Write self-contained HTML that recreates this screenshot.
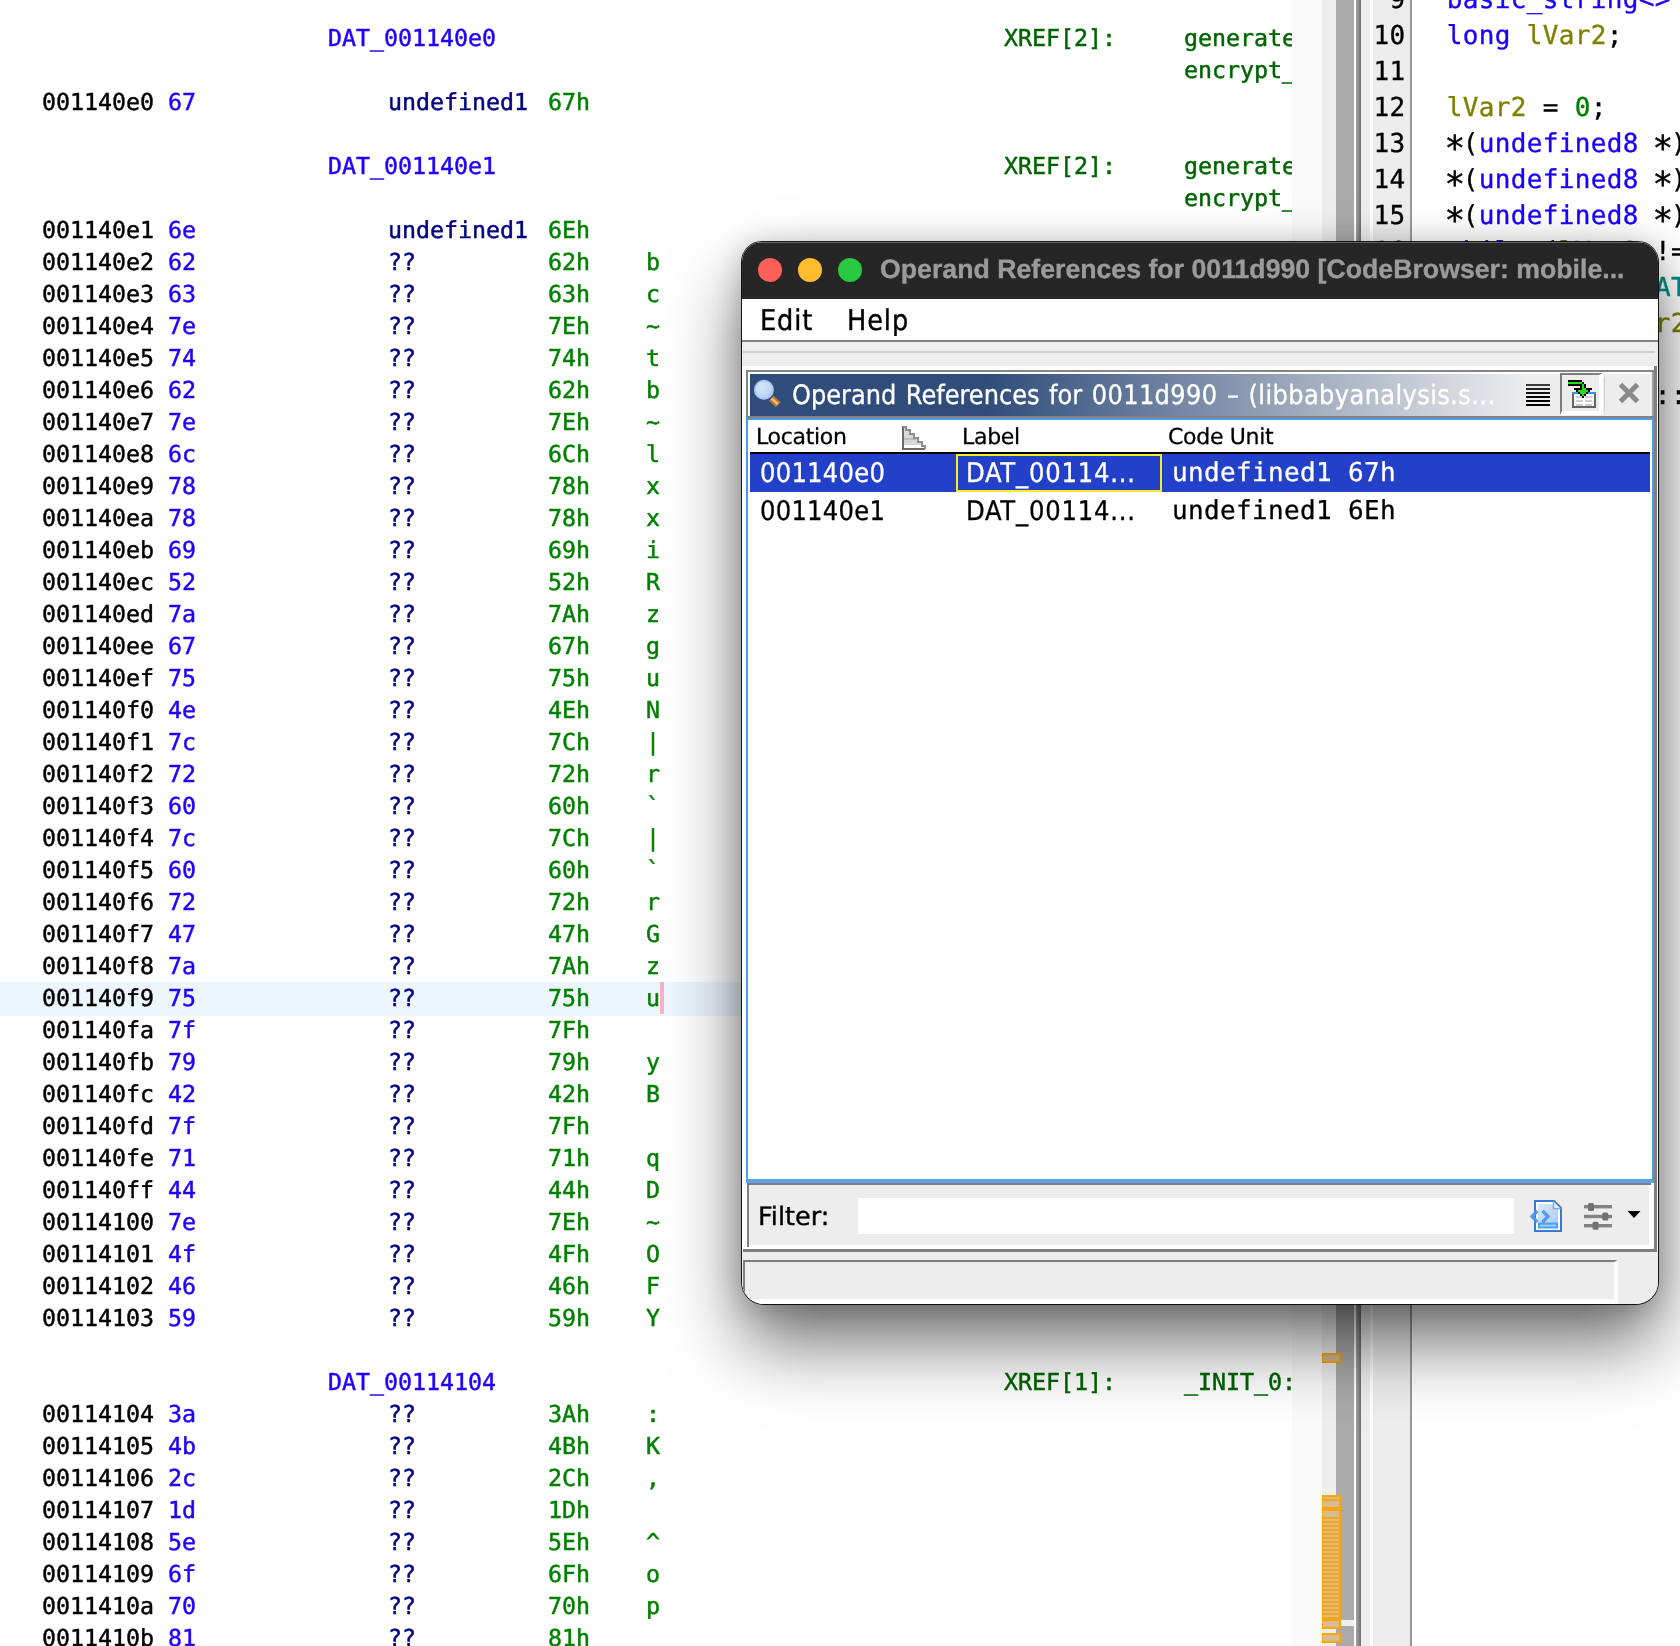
<!DOCTYPE html>
<html><head><meta charset="utf-8"><title>Operand References</title>
<style>
*{box-sizing:border-box;margin:0;padding:0}
html,body{width:1680px;height:1646px;overflow:hidden;background:#fff}
body{position:relative;font-family:"DejaVu Sans Mono","Liberation Mono",monospace}
i{font-style:normal;display:block;position:absolute}
#root{text-rendering:geometricPrecision;position:absolute;left:0;top:0;width:1680px;height:1646px;overflow:hidden;will-change:transform}
/* listing */
#ls{-webkit-text-stroke:0.45px;position:absolute;left:0;top:0;width:1292px;height:1646px;overflow:hidden;background:#fff;font-size:23.3px;letter-spacing:-0.028px;line-height:32px;white-space:pre}
.r{position:absolute;left:0;width:1292px;height:32px}
.r span{position:absolute;top:0}
.hl{background:#edf5fe;height:34px;margin-top:-0.5px}
.hl span{margin-top:0.5px}
.cur{left:660px;top:0;width:4px;height:32px;background:#f5b3c4}
.ad{color:#000}.by{color:#1f00ff}.lb{color:#1f00ff}.mn{color:#000080}.op{color:#008000}.xr{color:#006400}
/* strip */
#st i{top:0;height:1646px}
/* decompiler */
#dc{position:absolute;left:1412px;top:0;width:268px;height:1646px;overflow:hidden;background:#fff}
.ln,.dc{-webkit-text-stroke:0.35px;position:absolute;font-size:26px;letter-spacing:0.35px;line-height:36px;height:36px;white-space:pre;color:#000}
.ln{left:1371.4px;width:34px;text-align:right}
.dc{left:1446.8px}
.as{display:inline-block;transform:translateY(5.5px) scale(1.32)}
.kb{color:#1a00ff}.kv{color:#808000}.kg{color:#008000}.kc{color:#008b8b}
/* markers */
.mk{left:1322px;width:19px;border:2px solid #ffa500;border-left-width:1.5px;background:#d4bc94}
/* window */
#win{position:absolute;left:742px;top:242px;width:916px;height:1062px;border-radius:20px 20px 22px 22px;background:#ededed;overflow:hidden;font-family:"DejaVu Sans","Liberation Sans",sans-serif}
#shadow{position:absolute;left:742px;top:242px;width:916px;height:1062px;border-radius:20px 20px 22px 22px;box-shadow:0 0 0 1px rgba(0,0,0,.88),0 40px 72px rgba(0,0,0,.55),0 4px 30px rgba(0,0,0,.22)}
#tb{position:absolute;left:0;top:0;width:916px;height:57px;background:#262626;box-shadow:inset 0 1px 0 rgba(255,255,255,.28)}
#tb i{top:16px;width:24px;height:24px;border-radius:12px}
#tt{position:absolute;left:138px;top:0;line-height:54px;font-family:"Liberation Sans",sans-serif;font-weight:bold;font-size:26.7px;color:#9b9b9b;-webkit-text-stroke:0.35px #9b9b9b;white-space:pre}
#mb{position:absolute;left:0;top:57px;width:916px;height:43px;background:#fff;border-bottom:2px solid #808080;font-family:"DejaVu Sans Condensed","DejaVu Sans",sans-serif;font-size:28.5px;letter-spacing:0.9px;line-height:44px;white-space:pre;-webkit-text-stroke:0.4px #000}
#mb span{position:absolute;top:0}

#win .a{position:absolute}
#win .t{position:absolute;white-space:pre;font-family:"DejaVu Sans Condensed","DejaVu Sans","Liberation Sans",sans-serif}
#win .m{-webkit-text-stroke:0.3px;position:absolute;white-space:pre;font-family:"DejaVu Sans Mono","Liberation Mono",monospace;font-size:26px;letter-spacing:0.35px}
svg{position:absolute;overflow:visible}
</style></head>
<body>
<div id="root">
<div id="ls">
<div class="r" style="top:22.5px"><span class="lb" style="left:328px">DAT_001140e0</span><span class="xr" style="left:1004px">XREF[2]:</span><span class="xr" style="left:1184px">generate</span></div>
<div class="r" style="top:54.5px"><span class="xr" style="left:1184px">encrypt_</span></div>
<div class="r" style="top:86.5px"><span class="ad" style="left:42px">001140e0</span><span class="by" style="left:168px">67</span><span class="mn" style="left:388px">undefined1</span><span class="op" style="left:548px">67h</span></div>
<div class="r" style="top:150.5px"><span class="lb" style="left:328px">DAT_001140e1</span><span class="xr" style="left:1004px">XREF[2]:</span><span class="xr" style="left:1184px">generate</span></div>
<div class="r" style="top:182.5px"><span class="xr" style="left:1184px">encrypt_</span></div>
<div class="r" style="top:214.5px"><span class="ad" style="left:42px">001140e1</span><span class="by" style="left:168px">6e</span><span class="mn" style="left:388px">undefined1</span><span class="op" style="left:548px">6Eh</span></div>
<div class="r" style="top:246.5px"><span class="ad" style="left:42px">001140e2</span><span class="by" style="left:168px">62</span><span class="mn" style="left:388px">??</span><span class="op" style="left:548px">62h</span><span class="op" style="left:646px">b</span></div>
<div class="r" style="top:278.5px"><span class="ad" style="left:42px">001140e3</span><span class="by" style="left:168px">63</span><span class="mn" style="left:388px">??</span><span class="op" style="left:548px">63h</span><span class="op" style="left:646px">c</span></div>
<div class="r" style="top:310.5px"><span class="ad" style="left:42px">001140e4</span><span class="by" style="left:168px">7e</span><span class="mn" style="left:388px">??</span><span class="op" style="left:548px">7Eh</span><span class="op" style="left:646px">~</span></div>
<div class="r" style="top:342.5px"><span class="ad" style="left:42px">001140e5</span><span class="by" style="left:168px">74</span><span class="mn" style="left:388px">??</span><span class="op" style="left:548px">74h</span><span class="op" style="left:646px">t</span></div>
<div class="r" style="top:374.5px"><span class="ad" style="left:42px">001140e6</span><span class="by" style="left:168px">62</span><span class="mn" style="left:388px">??</span><span class="op" style="left:548px">62h</span><span class="op" style="left:646px">b</span></div>
<div class="r" style="top:406.5px"><span class="ad" style="left:42px">001140e7</span><span class="by" style="left:168px">7e</span><span class="mn" style="left:388px">??</span><span class="op" style="left:548px">7Eh</span><span class="op" style="left:646px">~</span></div>
<div class="r" style="top:438.5px"><span class="ad" style="left:42px">001140e8</span><span class="by" style="left:168px">6c</span><span class="mn" style="left:388px">??</span><span class="op" style="left:548px">6Ch</span><span class="op" style="left:646px">l</span></div>
<div class="r" style="top:470.5px"><span class="ad" style="left:42px">001140e9</span><span class="by" style="left:168px">78</span><span class="mn" style="left:388px">??</span><span class="op" style="left:548px">78h</span><span class="op" style="left:646px">x</span></div>
<div class="r" style="top:502.5px"><span class="ad" style="left:42px">001140ea</span><span class="by" style="left:168px">78</span><span class="mn" style="left:388px">??</span><span class="op" style="left:548px">78h</span><span class="op" style="left:646px">x</span></div>
<div class="r" style="top:534.5px"><span class="ad" style="left:42px">001140eb</span><span class="by" style="left:168px">69</span><span class="mn" style="left:388px">??</span><span class="op" style="left:548px">69h</span><span class="op" style="left:646px">i</span></div>
<div class="r" style="top:566.5px"><span class="ad" style="left:42px">001140ec</span><span class="by" style="left:168px">52</span><span class="mn" style="left:388px">??</span><span class="op" style="left:548px">52h</span><span class="op" style="left:646px">R</span></div>
<div class="r" style="top:598.5px"><span class="ad" style="left:42px">001140ed</span><span class="by" style="left:168px">7a</span><span class="mn" style="left:388px">??</span><span class="op" style="left:548px">7Ah</span><span class="op" style="left:646px">z</span></div>
<div class="r" style="top:630.5px"><span class="ad" style="left:42px">001140ee</span><span class="by" style="left:168px">67</span><span class="mn" style="left:388px">??</span><span class="op" style="left:548px">67h</span><span class="op" style="left:646px">g</span></div>
<div class="r" style="top:662.5px"><span class="ad" style="left:42px">001140ef</span><span class="by" style="left:168px">75</span><span class="mn" style="left:388px">??</span><span class="op" style="left:548px">75h</span><span class="op" style="left:646px">u</span></div>
<div class="r" style="top:694.5px"><span class="ad" style="left:42px">001140f0</span><span class="by" style="left:168px">4e</span><span class="mn" style="left:388px">??</span><span class="op" style="left:548px">4Eh</span><span class="op" style="left:646px">N</span></div>
<div class="r" style="top:726.5px"><span class="ad" style="left:42px">001140f1</span><span class="by" style="left:168px">7c</span><span class="mn" style="left:388px">??</span><span class="op" style="left:548px">7Ch</span><span class="op" style="left:646px">|</span></div>
<div class="r" style="top:758.5px"><span class="ad" style="left:42px">001140f2</span><span class="by" style="left:168px">72</span><span class="mn" style="left:388px">??</span><span class="op" style="left:548px">72h</span><span class="op" style="left:646px">r</span></div>
<div class="r" style="top:790.5px"><span class="ad" style="left:42px">001140f3</span><span class="by" style="left:168px">60</span><span class="mn" style="left:388px">??</span><span class="op" style="left:548px">60h</span><span class="op" style="left:646px">`</span></div>
<div class="r" style="top:822.5px"><span class="ad" style="left:42px">001140f4</span><span class="by" style="left:168px">7c</span><span class="mn" style="left:388px">??</span><span class="op" style="left:548px">7Ch</span><span class="op" style="left:646px">|</span></div>
<div class="r" style="top:854.5px"><span class="ad" style="left:42px">001140f5</span><span class="by" style="left:168px">60</span><span class="mn" style="left:388px">??</span><span class="op" style="left:548px">60h</span><span class="op" style="left:646px">`</span></div>
<div class="r" style="top:886.5px"><span class="ad" style="left:42px">001140f6</span><span class="by" style="left:168px">72</span><span class="mn" style="left:388px">??</span><span class="op" style="left:548px">72h</span><span class="op" style="left:646px">r</span></div>
<div class="r" style="top:918.5px"><span class="ad" style="left:42px">001140f7</span><span class="by" style="left:168px">47</span><span class="mn" style="left:388px">??</span><span class="op" style="left:548px">47h</span><span class="op" style="left:646px">G</span></div>
<div class="r" style="top:950.5px"><span class="ad" style="left:42px">001140f8</span><span class="by" style="left:168px">7a</span><span class="mn" style="left:388px">??</span><span class="op" style="left:548px">7Ah</span><span class="op" style="left:646px">z</span></div>
<div class="r hl" style="top:982.5px"><span class="ad" style="left:42px">001140f9</span><span class="by" style="left:168px">75</span><span class="mn" style="left:388px">??</span><span class="op" style="left:548px">75h</span><span class="op" style="left:646px">u</span><i class="cur"></i></div>
<div class="r" style="top:1014.5px"><span class="ad" style="left:42px">001140fa</span><span class="by" style="left:168px">7f</span><span class="mn" style="left:388px">??</span><span class="op" style="left:548px">7Fh</span></div>
<div class="r" style="top:1046.5px"><span class="ad" style="left:42px">001140fb</span><span class="by" style="left:168px">79</span><span class="mn" style="left:388px">??</span><span class="op" style="left:548px">79h</span><span class="op" style="left:646px">y</span></div>
<div class="r" style="top:1078.5px"><span class="ad" style="left:42px">001140fc</span><span class="by" style="left:168px">42</span><span class="mn" style="left:388px">??</span><span class="op" style="left:548px">42h</span><span class="op" style="left:646px">B</span></div>
<div class="r" style="top:1110.5px"><span class="ad" style="left:42px">001140fd</span><span class="by" style="left:168px">7f</span><span class="mn" style="left:388px">??</span><span class="op" style="left:548px">7Fh</span></div>
<div class="r" style="top:1142.5px"><span class="ad" style="left:42px">001140fe</span><span class="by" style="left:168px">71</span><span class="mn" style="left:388px">??</span><span class="op" style="left:548px">71h</span><span class="op" style="left:646px">q</span></div>
<div class="r" style="top:1174.5px"><span class="ad" style="left:42px">001140ff</span><span class="by" style="left:168px">44</span><span class="mn" style="left:388px">??</span><span class="op" style="left:548px">44h</span><span class="op" style="left:646px">D</span></div>
<div class="r" style="top:1206.5px"><span class="ad" style="left:42px">00114100</span><span class="by" style="left:168px">7e</span><span class="mn" style="left:388px">??</span><span class="op" style="left:548px">7Eh</span><span class="op" style="left:646px">~</span></div>
<div class="r" style="top:1238.5px"><span class="ad" style="left:42px">00114101</span><span class="by" style="left:168px">4f</span><span class="mn" style="left:388px">??</span><span class="op" style="left:548px">4Fh</span><span class="op" style="left:646px">O</span></div>
<div class="r" style="top:1270.5px"><span class="ad" style="left:42px">00114102</span><span class="by" style="left:168px">46</span><span class="mn" style="left:388px">??</span><span class="op" style="left:548px">46h</span><span class="op" style="left:646px">F</span></div>
<div class="r" style="top:1302.5px"><span class="ad" style="left:42px">00114103</span><span class="by" style="left:168px">59</span><span class="mn" style="left:388px">??</span><span class="op" style="left:548px">59h</span><span class="op" style="left:646px">Y</span></div>
<div class="r" style="top:1366.5px"><span class="lb" style="left:328px">DAT_00114104</span><span class="xr" style="left:1004px">XREF[1]:</span><span class="xr" style="left:1184px">_INIT_0:</span></div>
<div class="r" style="top:1398.5px"><span class="ad" style="left:42px">00114104</span><span class="by" style="left:168px">3a</span><span class="mn" style="left:388px">??</span><span class="op" style="left:548px">3Ah</span><span class="op" style="left:646px">:</span></div>
<div class="r" style="top:1430.5px"><span class="ad" style="left:42px">00114105</span><span class="by" style="left:168px">4b</span><span class="mn" style="left:388px">??</span><span class="op" style="left:548px">4Bh</span><span class="op" style="left:646px">K</span></div>
<div class="r" style="top:1462.5px"><span class="ad" style="left:42px">00114106</span><span class="by" style="left:168px">2c</span><span class="mn" style="left:388px">??</span><span class="op" style="left:548px">2Ch</span><span class="op" style="left:646px">,</span></div>
<div class="r" style="top:1494.5px"><span class="ad" style="left:42px">00114107</span><span class="by" style="left:168px">1d</span><span class="mn" style="left:388px">??</span><span class="op" style="left:548px">1Dh</span></div>
<div class="r" style="top:1526.5px"><span class="ad" style="left:42px">00114108</span><span class="by" style="left:168px">5e</span><span class="mn" style="left:388px">??</span><span class="op" style="left:548px">5Eh</span><span class="op" style="left:646px">^</span></div>
<div class="r" style="top:1558.5px"><span class="ad" style="left:42px">00114109</span><span class="by" style="left:168px">6f</span><span class="mn" style="left:388px">??</span><span class="op" style="left:548px">6Fh</span><span class="op" style="left:646px">o</span></div>
<div class="r" style="top:1590.5px"><span class="ad" style="left:42px">0011410a</span><span class="by" style="left:168px">70</span><span class="mn" style="left:388px">??</span><span class="op" style="left:548px">70h</span><span class="op" style="left:646px">p</span></div>
<div class="r" style="top:1622.5px"><span class="ad" style="left:42px">0011410b</span><span class="by" style="left:168px">81</span><span class="mn" style="left:388px">??</span><span class="op" style="left:548px">81h</span></div>
</div>
<div id="st">
<i style="left:1292px;width:30px;background:#fafafa"></i>
<i style="left:1322px;width:14px;background:#eeeeee"></i>
<i style="left:1336px;width:18px;background:#aaaaaa"></i>
<i style="left:1336px;width:18px;top:1620px;height:6px;background:#eeeeee"></i>
<i style="left:1354px;width:2px;background:#ffffff"></i>
<i style="left:1356px;width:5px;background:linear-gradient(90deg,#a6a6a6 0,#909090 40%,#6e6e6e 100%)"></i>
<i style="left:1361px;width:9px;background:#eeeeee"></i>
<i style="left:1370px;width:3px;background:#fff"></i>
<i style="left:1373px;width:37px;background:#ededed"></i>
<i style="left:1410px;width:2px;background:#9a9a9a"></i>
<i class="mk" style="top:1353px;height:10px"></i>
<i class="mk" style="top:1495px;height:10px"></i><i class="mk" style="top:1499px;height:10px"></i><i class="mk" style="top:1509px;height:10px"></i><i class="mk" style="top:1517px;height:10px"></i><i class="mk" style="top:1521px;height:10px"></i><i class="mk" style="top:1525px;height:10px"></i><i class="mk" style="top:1529px;height:10px"></i><i class="mk" style="top:1533px;height:10px"></i><i class="mk" style="top:1537px;height:10px"></i><i class="mk" style="top:1541px;height:10px"></i><i class="mk" style="top:1545px;height:10px"></i><i class="mk" style="top:1549px;height:10px"></i><i class="mk" style="top:1553px;height:10px"></i><i class="mk" style="top:1557px;height:10px"></i><i class="mk" style="top:1561px;height:10px"></i><i class="mk" style="top:1565px;height:10px"></i><i class="mk" style="top:1569px;height:10px"></i><i class="mk" style="top:1573px;height:10px"></i><i class="mk" style="top:1577px;height:10px"></i><i class="mk" style="top:1581px;height:10px"></i><i class="mk" style="top:1585px;height:10px"></i><i class="mk" style="top:1589px;height:10px"></i><i class="mk" style="top:1593px;height:10px"></i><i class="mk" style="top:1597px;height:10px"></i><i class="mk" style="top:1601px;height:10px"></i><i class="mk" style="top:1605px;height:10px"></i><i class="mk" style="top:1609px;height:10px"></i><i class="mk" style="top:1613px;height:10px"></i><i class="mk" style="top:1617px;height:10px"></i><i class="mk" style="top:1619px;height:10px"></i>
<i class="mk" style="top:1633px;height:10px"></i>
</div>
<div id="dc"></div>
<div class="ln" style="top:-18px">9</div>
<div class="dc" style="top:-18px"><span class="kb">basic_string&lt;&gt;</span> <span class="as">*</span>this;</div>
<div class="ln" style="top:18px">10</div>
<div class="dc" style="top:18px"><span class="kb">long</span> <span class="kv">lVar2</span>;</div>
<div class="ln" style="top:54px">11</div>
<div class="ln" style="top:90px">12</div>
<div class="dc" style="top:90px"><span class="kv">lVar2</span> = <span class="kg">0</span>;</div>
<div class="ln" style="top:126px">13</div>
<div class="dc" style="top:126px"><span class="as">*</span>(<span class="kb">undefined8</span> <span class="as">*</span>)this = 0;</div>
<div class="ln" style="top:162px">14</div>
<div class="dc" style="top:162px"><span class="as">*</span>(<span class="kb">undefined8</span> <span class="as">*</span>)(this + 8) = 0;</div>
<div class="ln" style="top:198px">15</div>
<div class="dc" style="top:198px"><span class="as">*</span>(<span class="kb">undefined8</span> <span class="as">*</span>)(this + 0x10) = 0;</div>
<div class="ln" style="top:234px">16</div>
<div class="dc" style="top:234px"><span class="kb">while</span> (<span class="kv">lVar2</span> != <span class="kg">0x18</span>) {</div>
<div class="ln" style="top:270px">17</div>
<div class="dc" style="top:270px">  <span class="kv">bVar1</span> = (&<span class="kc">DAT_001140e0</span>)[<span class="kv">lVar2</span>];</div>
<div class="ln" style="top:306px">18</div>
<div class="dc" style="top:306px">  <span class="kv">param_1</span>[<span class="kv">lVar2</span>] = <span class="kv">bVar1</span>;</div>
<div class="ln" style="top:342px">19</div>
<div class="dc" style="top:342px">  </div>
<div class="ln" style="top:378px">20</div>
<div class="dc" style="top:378px">  std::__ndk1::push_back(this);</div>
<div id="shadow"></div>
<div id="win">
 <div id="tb"><i style="left:16px;background:#fe5f57"></i><i style="left:56px;background:#febc2e"></i><i style="left:96px;background:#28c840"></i>
 <div id="tt">Operand References for 0011d990 [CodeBrowser: mobile...</div></div>
 <div id="mb"><span style="left:18px">Edit</span><span style="left:105px">Help</span></div>

 <!-- toolbar band -->
 <div class="a" style="left:1px;top:109px;width:912px;height:2px;background:#d0d0d0"></div>
 <!-- inner panel frame -->
 <div class="a" style="left:0;top:124px;width:916px;height:884px;background:#fff"></div>
 <div class="a" style="left:4px;top:128px;width:910px;height:2px;background:#858585"></div>
 <div class="a" style="left:4px;top:128px;width:2px;height:48px;background:#858585"></div>
 <div class="a" style="left:912px;top:124px;width:3px;height:886px;background:#7f7f7f"></div>
 <div class="a" style="left:910px;top:130px;width:2px;height:46px;background:#9c9c9c"></div>
 <!-- header -->
 <div class="a" id="hd" style="left:8px;top:132px;width:902px;height:42px;background:linear-gradient(90deg,#2f4c7a 0,#2f4c7a 26%,#ededed 86%)"></div>
 <div class="t" style="left:50px;top:133.2px;line-height:42px;font-size:26.8px;letter-spacing:0;word-spacing:1.8px;color:#fff;-webkit-text-stroke:0.3px #fff">Operand References for <span style="letter-spacing:0.4px">0011d990</span> – <span id="lib" style="letter-spacing:0.4px">(libbabyanalysis.s...</span></div>
 <div class="a" style="left:4px;top:174px;width:908px;height:2px;background:#808080"></div>
 <!-- table -->
 <div class="a" style="left:4px;top:176px;width:908px;height:765px;background:#fff;border:2px solid #4d9de6;border-bottom:4px solid #5aa5ea"></div>
 <div class="a" style="left:6px;top:178px;width:904px;height:32px;background:#fff"></div>
 <div class="t" style="left:14px;top:180px;line-height:32px;font-family:'DejaVu Sans','Liberation Sans',sans-serif;font-size:22px;letter-spacing:-0.3px;color:#000;-webkit-text-stroke:0.3px #000">Location</div>
 <div class="t" style="left:220px;top:180px;line-height:32px;font-family:'DejaVu Sans','Liberation Sans',sans-serif;font-size:22px;letter-spacing:-0.3px;color:#000;-webkit-text-stroke:0.3px #000">Label</div>
 <div class="t" style="left:426px;top:180px;line-height:32px;font-family:'DejaVu Sans','Liberation Sans',sans-serif;font-size:22px;letter-spacing:-0.3px;color:#000;-webkit-text-stroke:0.3px #000">Code Unit</div>
 <div class="a" style="left:8px;top:210px;width:900px;height:2px;background:#000"></div>
 <div class="a" style="left:8px;top:212px;width:900px;height:38px;background:#2340c8"></div>
 <div class="a" style="left:214px;top:212px;width:206px;height:38px;border:2px solid #f7ee22"></div>
 <div class="t" style="left:18px;top:213px;line-height:38px;font-size:27px;letter-spacing:0.25px;color:#fff;-webkit-text-stroke:0.3px #fff">001140e0</div>
 <div class="t" style="left:224px;top:213px;line-height:38px;font-size:27px;letter-spacing:0.8px;color:#fff;-webkit-text-stroke:0.3px #fff">DAT_00114...</div>
 <div class="m" style="left:430px;top:212px;line-height:38px;color:#fff">undefined1 67h</div>
 <div class="t" style="left:18px;top:251px;line-height:38px;font-size:27px;letter-spacing:0.25px;color:#000;-webkit-text-stroke:0.3px #000">001140e1</div>
 <div class="t" style="left:224px;top:251px;line-height:38px;font-size:27px;letter-spacing:0.8px;color:#000;-webkit-text-stroke:0.3px #000">DAT_00114...</div>
 <div class="m" style="left:430px;top:250px;line-height:38px;color:#000">undefined1 6Eh</div>
 <!-- filter -->
 <div class="a" style="left:5px;top:941px;width:904px;height:2px;background:#7c7c7c"></div>
 <div class="a" style="left:7px;top:943px;width:900px;height:60px;background:#ededed"></div>
 <div class="a" style="left:5px;top:943px;width:2px;height:62px;background:#808080"></div>
 <div class="t" style="left:16px;top:955px;line-height:40px;font-family:'DejaVu Sans','Liberation Sans',sans-serif;font-size:25.5px;color:#000;-webkit-text-stroke:0.4px #000">Filter:</div>
 <div class="a" style="left:116px;top:956px;width:656px;height:36px;background:#fff"></div>
 <div class="a" style="left:1px;top:1007px;width:914px;height:3px;background:#7f7f7f"></div>
 <!-- status -->
 <div class="a" style="left:1px;top:1018px;width:875px;height:44px;background:#ededed;border-top:2px solid #7f7f7f;border-left:2px solid #7f7f7f;border-right:4px solid #fff;border-bottom:5px solid #fff"></div>

 <!-- header icons -->
 <svg style="left:10px;top:134px" width="32" height="34" viewBox="0 0 32 34">
  <defs><radialGradient id="lg" cx="0.4" cy="0.35" r="0.75"><stop offset="0" stop-color="#dbe9fa"/><stop offset="0.7" stop-color="#b9d3f3"/><stop offset="1" stop-color="#9dbdea"/></radialGradient></defs>
  <path d="M19.3 22.2 L26.3 28.8" stroke="#c07a30" stroke-width="7" stroke-linecap="butt"/>
  <path d="M19.6 22.4 L25.8 28.2" stroke="#ecc08c" stroke-width="2.4" stroke-linecap="butt"/>
  <circle cx="11.9" cy="13.8" r="9.2" fill="url(#lg)" stroke="#a9c6ee" stroke-width="1.6"/>
 </svg>
 <svg style="left:784px;top:142px" width="24" height="22" viewBox="0 0 24 22" shape-rendering="crispEdges">
  <rect x="0" y="0" width="24" height="2" fill="#3a3a3a"/><rect x="0" y="4" width="24" height="2" fill="#222"/><rect x="0" y="8" width="24" height="2" fill="#111"/>
  <rect x="0" y="12" width="24" height="2" fill="#000"/><rect x="0" y="16" width="24" height="2" fill="#000"/><rect x="0" y="20" width="24" height="2" fill="#000"/>
 </svg>
 <div class="a" style="left:818px;top:131px;width:43px;height:42px;background:#ededed;border-left:2.5px solid #7d7d7d;border-top:2.5px solid #7d7d7d;border-right:4px solid #fff;border-bottom:4px solid #fff"></div>
 <div class="a" style="left:862px;top:135px;width:1px;height:36px;background:#d4d4d4"></div>
 <svg style="left:824px;top:136px" width="34" height="32" viewBox="0 0 34 32" shape-rendering="crispEdges">
  <rect x="6" y="14" width="24" height="16" fill="#fff" stroke="none"/>
  <rect x="6" y="14" width="24" height="2" fill="#3d8ff0"/>
  <path d="M7 16 V29 H29 V16" fill="none" stroke="#666" stroke-width="2"/>
  <rect x="10" y="18" width="7" height="2" fill="#cfcfcf"/><rect x="19" y="18" width="7" height="2" fill="#cfcfcf"/>
  <rect x="10" y="22" width="7" height="2" fill="#cfcfcf"/><rect x="19" y="22" width="7" height="2" fill="#cfcfcf"/>
  <rect x="10" y="26" width="7" height="2" fill="#cfcfcf"/><rect x="19" y="26" width="7" height="2" fill="#cfcfcf"/>
  <path d="M2 2 H16 V4 H18 V6 H20 V10 H26 V12 H24 V14 H22 V16 H20 V18 H18 V20 H16 V18 H14 V16 H12 V14 H10 V12 H8 V10 H14 V8 H2 Z" fill="#000"/>
  <path d="M2 4 H16 V6 H18 V10 H20 V12 H22 V14 H20 V16 H18 V18 H16 V16 H14 V14 H12 V12 H16 V6 H2 Z" fill="#1fe01f"/>
 </svg>
 <svg style="left:876px;top:140px" width="22" height="22" viewBox="0 0 22 22">
  <path d="M2.5 2.5 L19.5 19.5 M19.5 2.5 L2.5 19.5" stroke="#8a8a8a" stroke-width="5" fill="none"/>
 </svg>
 <!-- sort icon -->
 <svg style="left:160px;top:184px" width="24" height="24" viewBox="0 0 24 24" shape-rendering="crispEdges">
  <path d="M1 1 H4 V4 H8 V8 H12 V12 H16 V16 H20 V20 H23 V23 H1 Z" fill="#d8d8d8" stroke="none"/>
  <rect x="2" y="19" width="20" height="3" fill="#fff"/>
  <rect x="2" y="12" width="12" height="2" fill="#bdbdbd"/>
  <path d="M1 0 V23 H23" fill="none" stroke="#6b6b6b" stroke-width="2"/>
  <path d="M1 1 H4 V4 H8 V8 H12 V12 H16 V16 H20 V20 H23 V23" fill="none" stroke="#8f8f8f" stroke-width="1.5"/>
 </svg>
 <!-- filter icons -->
 <svg style="left:786px;top:957px" width="36" height="34" viewBox="0 0 36 34">
  <defs><linearGradient id="dg" x1="0" y1="0" x2="1" y2="1"><stop offset="0" stop-color="#dbe8fa"/><stop offset="1" stop-color="#a9c9f1"/></linearGradient></defs>
  <path d="M7 2 H26 L33 9 V32 H7 Z" fill="#fff" stroke="#3b78d0" stroke-width="2"/>
  <path d="M10 5 H25 L30 10 V29 H10 Z" fill="url(#dg)"/>
  <path d="M25.5 2.5 V9.5 H32.5" fill="#f4f8fe" stroke="#7ba9e6" stroke-width="1.5"/>
  <rect x="10" y="23.5" width="20" height="6" fill="#4aa2f4"/>
  <rect x="12" y="25.7" width="16" height="1.8" fill="#9fd2ff"/>
  <path d="M9.5 12 L4 17.5 L9.5 23 M14.5 12 L20 17.5 L14.5 23" fill="none" stroke="#4a93e8" stroke-width="3.4" opacity="0.9"/>
 </svg>
 <svg style="left:840px;top:958.8px" width="32" height="32" viewBox="0 0 32 32">
  <rect x="2" y="4" width="28" height="3.4" fill="#828282"/><rect x="2" y="13.8" width="28" height="3.4" fill="#828282"/><rect x="2" y="23" width="28" height="3.4" fill="#828282"/>
  <rect x="6" y="2" width="6" height="8" rx="1.5" fill="#727272"/><rect x="20.3" y="11.5" width="6" height="8" rx="1.5" fill="#727272"/><rect x="10.6" y="20.8" width="6" height="8" rx="1.5" fill="#727272"/>
 </svg>
 <svg style="left:885px;top:969px" width="14" height="8" viewBox="0 0 14 8"><path d="M0.5 0 H13.5 L7 7 Z" fill="#000"/></svg>
</div>
</div>
</body></html>
